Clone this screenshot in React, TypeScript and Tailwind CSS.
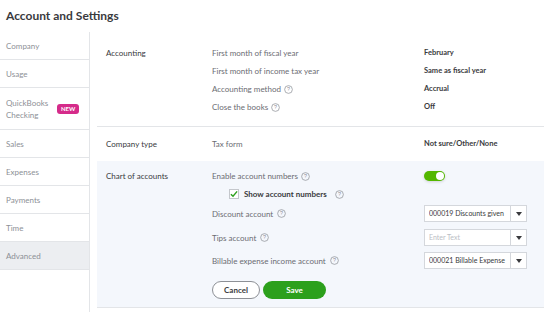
import React from "react";

const font = { fontFamily: "Lato, 'Open Sans', Arial, sans-serif" };

function Help() {
  return (
    <svg width="9" height="9" viewBox="0 0 10 10" className="inline-block shrink-0">
      <circle cx="5" cy="5" r="4.3" fill="none" stroke="#8d9096" strokeWidth="0.8" />
      <text x="5" y="7.2" textAnchor="middle" fontSize="6" fill="#8d9096" fontFamily="Arial, sans-serif">
        ?
      </text>
    </svg>
  );
}

function Dropdown({ value, placeholder }: { value?: string; placeholder?: string }) {
  return (
    <div className="flex h-[17px] w-[103px] items-stretch border border-[#d4d7dc] bg-white">
      <input
        readOnly
        value={value ?? ""}
        placeholder={placeholder}
        className="min-w-0 flex-1 bg-transparent px-[4px] text-[7px] text-[#393a3d] outline-none placeholder:text-[#babec5]"
        style={font}
      />
      <div className="flex w-[16px] items-center justify-center border-l border-[#d4d7dc]">
        <svg width="6" height="4" viewBox="0 0 6 4">
          <path d="M0 0 L6 0 L3 4 Z" fill="#393a3d" />
        </svg>
      </div>
    </div>
  );
}

const navItems = ["Company", "Usage", "QuickBooks Checking", "Sales", "Expenses", "Payments", "Time", "Advanced"];

function Sidebar() {
  return (
    <div className="w-[90px] shrink-0 border-r border-[#e3e5e8]">
      {navItems.map((item) => {
        if (item === "QuickBooks Checking") {
          return (
            <div key={item} className="flex h-[42px] items-center border-b border-[#e3e5e8] pl-[6px]">
              <span className="w-[51px] text-[8px] leading-[12px] text-[#8d9096]">
                QuickBooks
                <br />
                Checking
              </span>
              <span className="rounded-[3px] bg-[#d52b8a] px-[4px] text-[6px] font-bold leading-[10px] text-white">
                NEW
              </span>
            </div>
          );
        }
        const active = item === "Advanced";
        return (
          <div
            key={item}
            className={`flex h-[28px] items-center border-b border-[#e3e5e8] pl-[6px] text-[8px] text-[#8d9096] ${
              active ? "bg-[#eceef1]" : ""
            }`}
          >
            {item}
          </div>
        );
      })}
    </div>
  );
}

function Row({ label, value, help }: { label: string; value: string; help?: boolean }) {
  return (
    <div className="flex h-[18px] items-center">
      <div className="flex w-[212px] items-center gap-[3px] text-[8px] text-[#6b6c72]">
        {label}
        {help && <Help />}
      </div>
      <div className="text-[7.5px] font-bold text-[#393a3d]">{value}</div>
    </div>
  );
}

export default function App() {
  return (
    <div className="h-[312px] w-[544px] overflow-hidden bg-white" style={font}>
      <div className="flex h-[32px] items-center pl-[6px] text-[12px] font-bold text-[#393a3d]">
        Account and Settings
      </div>
      <div className="flex h-[280px]">
        <Sidebar />
        <div className="flex-1 pl-[7px]">
          {/* Accounting */}
          <div className="flex border-b border-[#e3e5e8] pt-[12px] pb-[10px] pl-[9px]">
            <div className="flex h-[18px] w-[106px] items-center text-[8px] text-[#393a3d]">Accounting</div>
            <div className="flex-1">
              <Row label="First month of fiscal year" value="February" />
              <Row label="First month of income tax year" value="Same as fiscal year" />
              <Row label="Accounting method" value="Accrual" help />
              <Row label="Close the books" value="Off" help />
            </div>
          </div>

          {/* Company type */}
          <div className="flex py-[8px] pl-[9px]">
            <div className="flex h-[18px] w-[106px] items-center text-[8px] text-[#393a3d]">Company type</div>
            <div className="flex-1">
              <Row label="Tax form" value="Not sure/Other/None" />
            </div>
          </div>

          {/* Chart of accounts */}
          <div className="flex border-b border-[#e3e5e8] bg-[#f4f7fc] pt-[6px] pb-[8px] pl-[9px]">
            <div className="flex h-[18px] w-[106px] items-center text-[8px] text-[#393a3d]">Chart of accounts</div>
            <div className="flex-1">
              <div className="flex h-[18px] items-center">
                <div className="flex w-[212px] items-center gap-[3px] text-[8px] text-[#6b6c72]">
                  Enable account numbers
                  <Help />
                </div>
                <div className="relative h-[10px] w-[21px] rounded-full bg-[#53b700] shadow-[0_1px_3px_rgba(0,0,0,0.15)]">
                  <div className="absolute top-[1px] right-[1px] h-[8px] w-[8px] rounded-full bg-white" />
                </div>
              </div>
              <div className="flex h-[18px] items-center pl-[17px]">
                <div className="mr-[5px] flex h-[10px] w-[10px] items-center justify-center border border-[#c4c7cc] bg-white">
                  <svg width="9" height="8" viewBox="0 0 9 8">
                    <path d="M1 4.2 L3.4 6.6 L8 1" fill="none" stroke="#2ca01c" strokeWidth="1.6" />
                  </svg>
                </div>
                <span className="mr-[8px] text-[8px] font-bold text-[#393a3d]">Show account numbers</span>
                <Help />
              </div>
              <div className="mt-[2px] flex h-[17px] items-center">
                <div className="flex w-[212px] items-center gap-[4px] text-[8px] text-[#6b6c72]">
                  Discount account
                  <Help />
                </div>
                <Dropdown value="000019 Discounts given" />
              </div>
              <div className="mt-[7px] flex h-[17px] items-center">
                <div className="flex w-[212px] items-center gap-[4px] text-[8px] text-[#6b6c72]">
                  Tips account
                  <Help />
                </div>
                <Dropdown placeholder="Enter Text" />
              </div>
              <div className="mt-[6px] flex h-[17px] items-center">
                <div className="flex w-[212px] items-center gap-[4px] text-[8px] text-[#6b6c72]">
                  Billable expense income account
                  <Help />
                </div>
                <Dropdown value="000021 Billable Expense Income" />
              </div>
              <div className="mt-[12px] flex items-center gap-[3px]">
                <button className="h-[18px] w-[48px] rounded-full border border-[#8d9096] bg-white text-[8px] font-bold text-[#393a3d]">
                  Cancel
                </button>
                <button className="h-[18px] w-[63px] rounded-full bg-[#2ca01c] text-[8px] font-bold text-white">
                  Save
                </button>
              </div>
            </div>
          </div>
        </div>
      </div>
    </div>
  );
}
